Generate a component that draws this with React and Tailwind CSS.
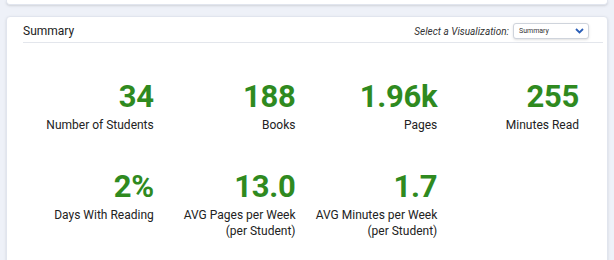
import React from "react";

const stats = [
  { value: "34", label: ["Number of Students"] },
  { value: "188", label: ["Books"] },
  { value: "1.96k", label: ["Pages"] },
  { value: "255", label: ["Minutes Read"] },
  { value: "2%", label: ["Days With Reading"] },
  { value: "13.0", label: ["AVG Pages per Week", "(per Student)"] },
  { value: "1.7", label: ["AVG Minutes per Week", "(per Student)"] },
];

const App = () => {
  return (
    <div
      className="h-[260px] overflow-hidden bg-[#eef1f8] px-[6px]"
      style={{ fontFamily: "Roboto, 'Liberation Sans', sans-serif" }}
    >
      {/* Top card (cut off) */}
      <div className="h-[5px] rounded-b-[4px] border border-t-0 border-[#e1e5ee] bg-white shadow-sm"></div>

      {/* Summary card */}
      <div className="mt-[11px] h-[300px] rounded-[4px] border border-[#e1e5ee] bg-white shadow-sm">
        <div className="ml-[16px] mr-[4px] flex items-center justify-between border-b border-[#e3e6ec] pt-[5px] pb-[2px]">
          <h2 className="text-[12px] text-[#222]">Summary</h2>
          <div className="mr-[14px] flex items-center gap-[4px]">
            <span className="text-[10px] italic text-[#333]">
              Select a Visualization:
            </span>
            <div className="flex h-[16px] w-[76px] items-center justify-between rounded-[3px] border border-[#cfd4dc] bg-white pl-[5px] pr-[4px] shadow-sm">
              <span className="text-[7px] text-[#333]">Summary</span>
              <svg width="9" height="6" viewBox="0 0 9 6">
                <path
                  d="M1 1l3.5 3.5L8 1"
                  fill="none"
                  stroke="#2b5fb8"
                  strokeWidth="1.8"
                />
              </svg>
            </div>
          </div>
        </div>

        {/* Stats */}
        <div className="ml-[5px] mt-[37px] grid w-[567px] grid-cols-4 gap-y-[37px]">
          {stats.map((s) => (
            <div key={s.value} className="text-right">
              <div className="text-[31px] font-bold leading-[34px] tracking-[-0.3px] text-[#2f8a1f]">
                {s.value}
              </div>
              <div className="mt-[3px] text-[12px] leading-[16px] text-[#222]">
                {s.label.map((l) => (
                  <div key={l}>{l}</div>
                ))}
              </div>
            </div>
          ))}
        </div>
      </div>
    </div>
  );
};

export default App;
